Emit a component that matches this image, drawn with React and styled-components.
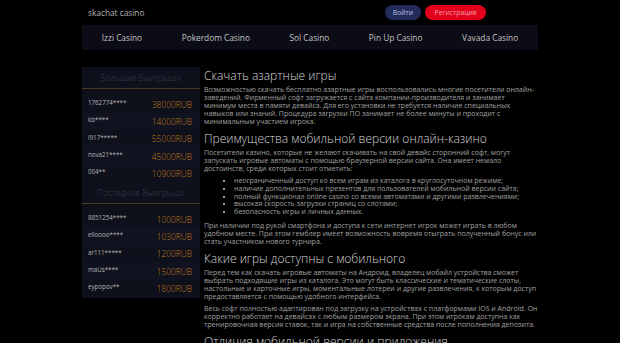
import React from "react";
import styled, { createGlobalStyle } from "styled-components";

const Global = createGlobalStyle`
  body {
    margin: 0;
    background: #000;
    font-family: "Open Sans", "Liberation Sans", sans-serif;
    color: #c9c9c9;
  }
`;

const bigWins = [
  ["1762774****", "38000RUB"],
  ["kb****", "14000RUB"],
  ["l917*****", "55000RUB"],
  ["nova21****", "45000RUB"],
  ["004**", "10900RUB"],
];

const lastWins = [
  ["8851254****", "1000RUB"],
  ["elioooo****", "1030RUB"],
  ["ar111*****", "1200RUB"],
  ["maUs****", "1500RUB"],
  ["eypopov**", "1800RUB"],
];

const casinos = ["Izzi Casino", "Pokerdom Casino", "Sol Casino", "Pin Up Casino", "Vavada Casino"];

const App = () => {
  return (
    <>
      <Global />
      <Page>
        <Header>
          <Logo>skachat casino</Logo>
          <Buttons>
            <HeadButton>Войти</HeadButton>
            <HeadButton red>Регистрация</HeadButton>
          </Buttons>
        </Header>
        <Nav>
          {casinos.map((c) => (
            <NavItem key={c}>{c}</NavItem>
          ))}
        </Nav>
        <Main>
          <Sidebar>
            <SideTitle>Большие Выигрыши</SideTitle>
            {bigWins.map(([n, a], i) => (
              <WinRow key={n} odd={i % 2 === 1}>
                <WinName>{n}</WinName>
                <WinAmount>{a}</WinAmount>
              </WinRow>
            ))}
            <SideTitle>Последние Выигрыши</SideTitle>
            {lastWins.map(([n, a], i) => (
              <WinRow key={n} odd={i % 2 === 1}>
                <WinName>{n}</WinName>
                <WinAmount>{a}</WinAmount>
              </WinRow>
            ))}
          </Sidebar>
          <Content>
            <Title>Скачать азартные игры</Title>
            <Text>
              Возможностью скачать бесплатно азартные игры воспользовались многие посетители онлайн-заведений.
              Фирменный софт загружается с сайта компании-производителя и занимает минимум места в памяти девайса.
              Для его установки не требуется наличие специальных навыков или знаний. Процедура загрузки ПО занимает
              не более минуты и проходит с минимальным участием игрока.
            </Text>
            <Title>Преимущества мобильной версии онлайн-казино</Title>
            <Text>
              Посетители казино, которые не желают скачивать на свой девайс сторонний софт, могут запускать игровые
              автоматы с помощью браузерной версии сайта. Она имеет немало достоинств, среди которых стоит отметить:
            </Text>
            <List>
              <li>неограниченный доступ ко всем играм из каталога в круглосуточном режиме;</li>
              <li>наличие дополнительных презентов для пользователей мобильной версии сайта;</li>
              <li>полный функционал online casino со всеми автоматами и другими развлечениями;</li>
              <li>высокая скорость загрузки страниц со слотами;</li>
              <li>безопасность игры и личных данных.</li>
            </List>
            <Text>
              При наличии под рукой смартфона и доступа к сети интернет игрок может играть в любом удобном месте. При
              этом гемблер имеет возможность вовремя отыграть полученный бонус или стать участником нового турнира.
            </Text>
            <Title>Какие игры доступны с мобильного</Title>
            <Text>
              Перед тем как скачать игровые автоматы на Андроид, владелец мобайл устройства сможет выбрать подходящие
              игры из каталога. Это могут быть классические и тематические слоты, настольные и карточные игры,
              моментальные лотереи и другие развлечения, к которым доступ предоставляется с помощью удобного
              интерфейса.
            </Text>
            <Text>
              Весь софт полностью адаптирован под загрузку на устройствах с платформами IOS и Android. Он корректно
              работает на девайсах с любым размером экрана. При этом игрокам доступна как тренировочная версия
              ставок, так и игра на собственные средства после пополнения депозита.
            </Text>
            <Title>Отличия мобильной версии и приложения</Title>
          </Content>
        </Main>
      </Page>
    </>
  );
};

const Page = styled.div`
  width: 456px;
  margin: 0 auto;
`;

const Header = styled.div`
  height: 25px;
  display: flex;
  align-items: center;
  justify-content: space-between;
  padding: 0 52px 0 6px;
`;

const Logo = styled.div`
  font-size: 8.3px;
  color: #b4b4b4;
  margin-top: -1px;
`;

const Buttons = styled.div`
  display: flex;
  gap: 4px;
  margin-top: -1px;
`;

const HeadButton = styled.div`
  height: 15px;
  line-height: 15px;
  padding: 0 ${(p) => (p.red ? "9.5px" : "8px")};
  border-radius: 8px;
  font-size: 6.8px;
  color: ${(p) => (p.red ? "#f3a0ab" : "#b9c0e0")};
  background: ${(p) => (p.red ? "#e3001b" : "#222b5a")};
`;

const Nav = styled.div`
  height: 25px;
  background: #0b0c15;
  display: flex;
  align-items: center;
  justify-content: space-around;
`;

const NavItem = styled.div`
  font-size: 8.3px;
  color: #c4c4c4;
`;

const Main = styled.div`
  display: flex;
  gap: 4px;
  margin-top: 17px;
`;

const Sidebar = styled.div`
  width: 118px;
  flex-shrink: 0;
  align-self: flex-start;
  background: #0e101b;
  padding-bottom: 1px;
`;

const SideTitle = styled.div`
  font-size: 8.3px;
  font-weight: 300;
  line-height: 12px;
  color: #363a4b;
  text-align: center;
  padding: 5px 0 4px;
  border-bottom: 1px solid #4a3c22;
  margin: 0 0 6.5px;
`;

const WinRow = styled.div`
  height: 17.3px;
  display: flex;
  align-items: center;
  justify-content: space-between;
  padding: 0 8px 0 6px;
  background: ${(p) => (p.odd ? "#101220" : "#0e101b")};
`;

const WinName = styled.div`
  font-size: 6.2px;
  color: #b5b5b5;
  margin-top: -3px;
`;

const WinAmount = styled.div`
  font-size: 8.4px;
  font-weight: 300;
  color: #c27c1b;
`;

const Content = styled.div`
  flex: 1;
`;

const Title = styled.h2`
  margin: 0;
  font-size: 12px;
  font-weight: 300;
  color: #d4d4d4;
  line-height: 17px;
`;

const Text = styled.p`
  margin: 2px 0 4px;
  font-size: 7px;
  line-height: 8px;
  color: #a0a0a0;
`;

const List = styled.ul`
  margin: 0 0 6px;
  padding-left: 30px;
  font-size: 7px;
  line-height: 7.8px;
  color: #a0a0a0;
  list-style: square;
`;

export default App;
